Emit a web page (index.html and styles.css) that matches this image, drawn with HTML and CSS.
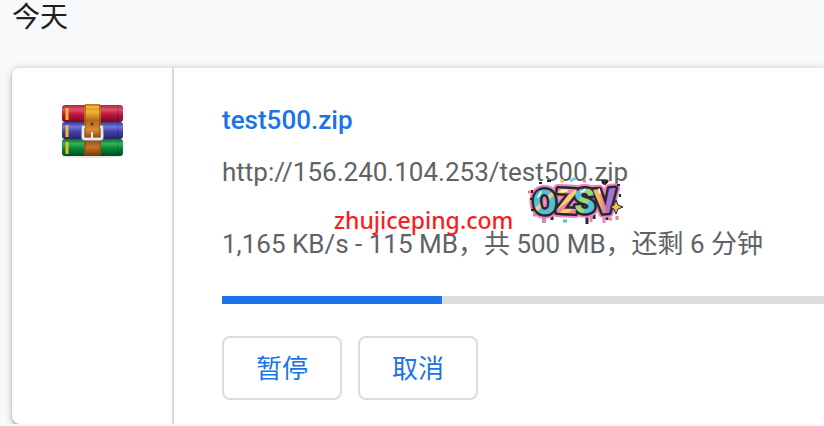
FILE: index.html
```html
<!DOCTYPE html>
<html lang="zh-CN">
<head>
    <meta charset="UTF-8">
    <meta name="viewport" content="width=device-width, initial-scale=1.0">
    <title>下载内容</title>
    <link rel="stylesheet" href="styles.css">
</head>
<body>

    <main class="downloads">
        <h1 class="date">今天</h1>

        <article class="card">
            <div class="file-icon">
                <svg width="64" height="56" viewBox="0 0 64 56" aria-hidden="true">
                    <defs>
                        <linearGradient id="red" x2="0" y2="1">
                            <stop offset="0" stop-color="#a82a42"/>
                            <stop offset=".28" stop-color="#e0506c"/>
                            <stop offset=".55" stop-color="#bd1740"/>
                            <stop offset="1" stop-color="#790820"/>
                        </linearGradient>
                        <linearGradient id="blue" x2="0" y2="1">
                            <stop offset="0" stop-color="#36368c"/>
                            <stop offset=".28" stop-color="#7476dc"/>
                            <stop offset=".55" stop-color="#4345ac"/>
                            <stop offset="1" stop-color="#252269"/>
                        </linearGradient>
                        <linearGradient id="green" x2="0" y2="1">
                            <stop offset="0" stop-color="#08702d"/>
                            <stop offset=".28" stop-color="#31b35a"/>
                            <stop offset=".55" stop-color="#078638"/>
                            <stop offset="1" stop-color="#034c1b"/>
                        </linearGradient>
                        <linearGradient id="belt" x2="0" y2="1">
                            <stop offset="0" stop-color="#c77b12"/>
                            <stop offset=".15" stop-color="#f0b530"/>
                            <stop offset=".32" stop-color="#b9661a"/>
                            <stop offset=".5" stop-color="#d98a35"/>
                            <stop offset=".66" stop-color="#8d420c"/>
                            <stop offset=".83" stop-color="#c97428"/>
                            <stop offset="1" stop-color="#733407"/>
                        </linearGradient>
                    </defs>
                    <ellipse cx="32" cy="53" rx="30" ry="2" fill="#e4e4e4"/>
                    <rect x="2" y="2" width="61" height="17" rx="3" fill="url(#red)"/>
                    <rect x="2" y="19" width="61" height="17" rx="3" fill="url(#blue)"/>
                    <rect x="2" y="36" width="61" height="17" rx="3" fill="url(#green)"/>
                    <path d="M7 5v12M7 22v12M7 39v12" stroke="#efbd22" stroke-width="3"/>
                    <path d="M58 4v13M58 21v13M58 38v13" stroke="#000" stroke-opacity=".2"/>
                    <path d="M25 1h15l1 2v50H24V3z" fill="url(#belt)"/>
                    <path d="M25 2v50M40 2v50" stroke="#864409" stroke-width="1"/>
                    <path d="M26 4h13" stroke="#ffdc68" stroke-width="1"/>
                    <circle cx="32" cy="21" r="1.6" fill="#713608"/>
                    <path d="M25 24h-2v10q0 2 2 2h15q2 0 2-2V24h-2" fill="none" stroke="#77777b" stroke-width="4"/>
                    <path d="M25 24h-2v10q0 2 2 2h15q2 0 2-2V24h-2" fill="none" stroke="#e8e8ee" stroke-width="2.4"/>
                    <path d="M32 29v7" stroke="#e8e8ee" stroke-width="2"/>
                </svg>
            </div>

            <div class="details">
                <a class="name" href="#">test500.zip</a>
                <a class="url" href="#">http://156.240.104.253/test500.zip</a>
                <p class="status">1,165 KB/s - 115 MB，共 500 MB，还剩 6 分钟</p>
                <progress class="progress" value="36.5" max="100" aria-label="下载进度"></progress>
                <div class="actions">
                    <button class="button" type="button">暂停</button>
                    <button class="button" type="button">取消</button>
                </div>

                <span class="watermark">zhujiceping.com</span>
                <svg class="sticker" width="100" height="50" viewBox="0 0 100 50" role="img" aria-label="OZSV">
                    <defs>
                        <pattern id="o" width="14" height="14" patternUnits="userSpaceOnUse" patternTransform="rotate(50)">
                            <rect width="14" height="14" fill="#52bfd8"/>
                            <rect width="4" height="14" fill="#f3cf79"/>
                        </pattern>
                        <pattern id="z" width="9" height="9" patternUnits="userSpaceOnUse" patternTransform="rotate(50)">
                            <rect width="9" height="9" fill="#f7cf6f"/>
                            <rect width="4" height="9" fill="#f185a6"/>
                        </pattern>
                        <linearGradient id="s" x2="1" y2="1">
                            <stop offset=".35" stop-color="#51c2db"/>
                            <stop offset=".36" stop-color="#9bd779"/>
                            <stop offset=".6" stop-color="#9bd779"/>
                            <stop offset=".61" stop-color="#51c2db"/>
                        </linearGradient>
                        <linearGradient id="v">
                            <stop offset=".2" stop-color="#f5bd65"/>
                            <stop offset=".45" stop-color="#ee8691"/>
                            <stop offset=".55" stop-color="#a674d1"/>
                        </linearGradient>
                        <g id="word">
                            <text x="6" y="37" transform="rotate(-4 18 25)" fill="url(#o)">O</text>
                            <text x="29" y="36" transform="rotate(3 38 25)" fill="url(#z)">Z</text>
                            <text x="47" y="36" transform="rotate(-3 57 25)" fill="url(#s)">S</text>
                            <text x="67" y="36" transform="rotate(-4 78 25)" fill="url(#v)">V</text>
                        </g>
                    </defs>
                    <path d="M17 36v10M25 38v5M60 38v9M67 37v5M80 37v6" stroke="#292632" stroke-width="3"/>
                    <path d="M17 42v4M64 39v6M77 38v8" stroke="#e987bd" stroke-width="3"/>
                    <use href="#word" class="glow"/>
                    <use href="#word" class="outline"/>
                    <use href="#word"/>
                    <path d="M11 20l3-5M34 14h6M54 15l4-2M72 12l1 4" stroke="#fff" stroke-width="1.5" stroke-linecap="round"/>
                    <path d="M89 23l2 5 5 2-5 2-2 5-2-5-4-2 4-2z" fill="#f4bd51" stroke="#292632"/>
                    <path d="M43 4l6-3" stroke="#75cbe8" stroke-width="3"/>
                    <circle cx="35" cy="4" r="2" fill="#f4c56a"/>
                    <path d="M75 3l3 1 3-1v2l-3 3-3-2z" fill="#292632" stroke="#292632"/>
                    <path d="M12 6h3M20 4h4M5 13v3M3 22h2M4 33h3M90 8h3M93 17v3" stroke="#292632" stroke-width="2"/>
                    <path d="M1 15h3M6 38h3M56 4h3M82 42h3M90 39v4" stroke="#ed8297" stroke-width="3"/>
                    <path d="M36 44h4" stroke="#57bed3" stroke-width="3"/>
                </svg>
            </div>
        </article>
    </main>

</body>
</html>
```
FILE: styles.css
```css
body {
    background: #f8f9fb;
    margin: 0;
    font-family: Roboto, "Noto Sans CJK SC", sans-serif;
    font-size: 26px;
    line-height: 32px;
    color: #5f6368;
}
.downloads {
    padding: 2px 0 0 12px;
}
.date {
    margin: 0 0 34px;
    font-size: 28px;
    font-weight: 400;
    color: #202124;
}
.card {
    display: flex;
    background: white;
    border-radius: 8px 0 0 8px;
    box-shadow: 0 2px 2px rgba(60, 64, 67, 0.3), 0 1px 6px 1px rgba(60, 64, 67, 0.25);
}
.file-icon {
    display: flex;
    justify-content: center;
    align-items: flex-start;
    flex: 0 0 160px;
    padding-top: 35px;
    border-right: 2px solid #d8d8d8;
}
.details {
    position: relative;
    display: flex;
    flex-direction: column;
    align-items: flex-start;
    flex: 1;
    padding: 36px 0 24px 48px;
}
.name {
    color: #1a73e8;
    font-weight: 500;
    text-decoration: none;
    margin-bottom: 20px;
}
.url {
    color: #5f6368;
    text-decoration: none;
    margin-bottom: 40px;
}
.status {
    margin: 0 0 36px;
}
.progress {
    appearance: none;
    display: block;
    width: 100%;
    height: 8px;
    border: none;
    background: #ddd;
    margin-bottom: 32px;
}
.progress::-webkit-progress-bar {
    background: #ddd;
}
.progress::-webkit-progress-value {
    background: #1a73e8;
}
.actions {
    display: flex;
    gap: 16px;
}
.button {
    width: 120px;
    height: 64px;
    padding: 0 0 4px;
    background: white;
    color: #1a73e8;
    border: 2px solid #dadce0;
    border-radius: 8px;
    font-family: inherit;
    font-size: 26px;
    cursor: pointer;
}
.button:hover {
    background: #f6fafe;
}

/* overlays on top of the download text */
.watermark {
    position: absolute;
    left: 160px;
    top: 136px;
    font-family: "Comic Sans MS", "Noto Sans", sans-serif;
    font-size: 23px;
    font-weight: 500;
    color: #fa1e1e;
}
.sticker {
    position: absolute;
    left: 353px;
    top: 109px;
    font-family: Roboto, sans-serif;
    font-size: 34px;
    font-weight: 900;
}
.glow {
    stroke: #e987bd;
    stroke-width: 9px;
    stroke-linejoin: round;
}
.outline {
    stroke: #292632;
    stroke-width: 5px;
    stroke-linejoin: round;
}
```
